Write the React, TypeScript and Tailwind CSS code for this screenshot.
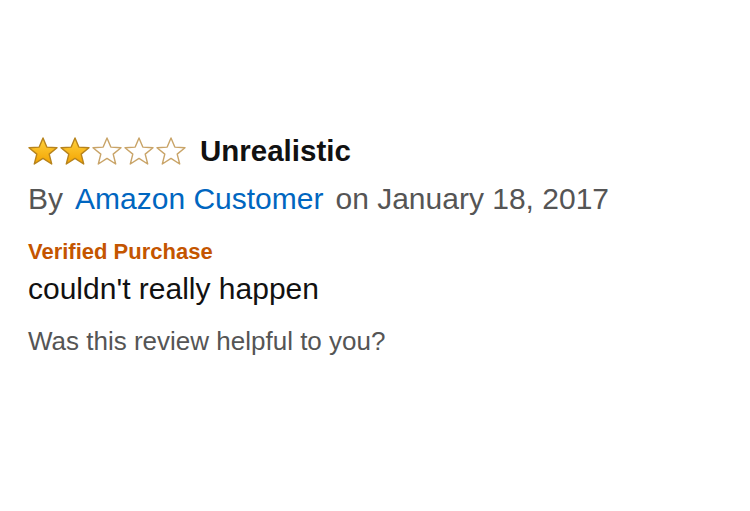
import React from 'react';

const font = { fontFamily: '"Liberation Sans", Arial, sans-serif' };

function Star({ filled }: { filled: boolean }) {
  return (
    <svg width="30" height="28" viewBox="0 0 30 28" className="shrink-0">
      <defs>
        <linearGradient id="gold" x1="0" y1="0" x2="0" y2="1">
          <stop offset="0%" stopColor="#ffd23f" />
          <stop offset="100%" stopColor="#f3a300" />
        </linearGradient>
      </defs>
      <polygon
        points="15,1 18.8,10.1 29,10.7 21.2,17.1 23.7,27 15,21.4 6.3,27 8.8,17.1 1,10.7 11.2,10.1"
        fill={filled ? 'url(#gold)' : '#ffffff'}
        stroke={filled ? '#b7831c' : '#c9a468'}
        strokeWidth="1.4"
        strokeLinejoin="round"
      />
    </svg>
  );
}

export default function App() {
  const rating = 2;

  return (
    <div className="w-[750px] h-[511px] bg-white overflow-hidden" style={font}>
      <div className="pl-[28px] pt-[133px] flex flex-col">
        {/* titre + étoiles */}
        <div className="flex items-center h-[36px]">
          <div className="flex gap-[2px]">
            {[1, 2, 3, 4, 5].map((i) => (
              <Star key={i} filled={i <= rating} />
            ))}
          </div>
          <span className="ml-[14px] text-[29.5px] leading-[36px] font-bold text-[#111111]">Unrealistic</span>
        </div>

        <div className="mt-[10px] text-[30px] leading-[40px] text-[#555555] whitespace-nowrap">
          By<a className="mx-[12px] text-[#0066c0]">Amazon Customer</a>on January 18, 2017
        </div>

        <div className="mt-[19px] text-[22px] leading-[28px] font-bold text-[#c45500]">Verified Purchase</div>

        <div className="mt-[5px] text-[30px] leading-[36px] text-[#111111]">couldn't really happen</div>

        <div className="mt-[17px] text-[26px] leading-[34px] text-[#555555]">Was this review helpful to you?</div>
      </div>
    </div>
  );
}
